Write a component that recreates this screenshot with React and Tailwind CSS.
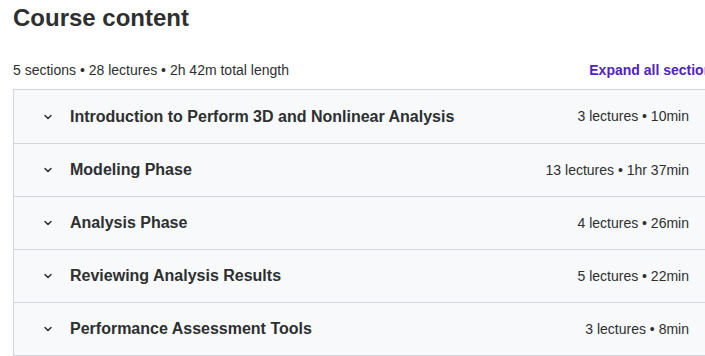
import React from 'react';

const sections = [
    { title: 'Introduction to Perform 3D and Nonlinear Analysis', meta: '3 lectures • 10min' },
    { title: 'Modeling Phase', meta: '13 lectures • 1hr 37min' },
    { title: 'Analysis Phase', meta: '4 lectures • 26min' },
    { title: 'Reviewing Analysis Results', meta: '5 lectures • 22min' },
    { title: 'Performance Assessment Tools', meta: '3 lectures • 8min' },
];

const Chevron = () => (
    <svg width="12" height="12" viewBox="0 0 24 24" fill="none" stroke="#2d2f31" strokeWidth="3" strokeLinecap="round" strokeLinejoin="round">
        <path d="M6 9l6 6 6-6" />
    </svg>
);

const App = () => {
    return (
        <div className="w-[705px] h-[356px] overflow-hidden bg-white text-[#2d2f31]" style={{ fontFamily: '"Liberation Sans", Arial, sans-serif' }}>
            <div className="w-[720px] shrink-0 pl-[13px] pt-[3px]">
                {/* Header */}
                <h2 className="text-[24px] leading-[30px] font-bold">Course content</h2>
                <div className="flex items-center justify-between mt-[27px] h-[20px]">
                    <span className="text-[14px] text-[#2d2f31]">5 sections • 28 lectures • 2h 42m total length</span>
                    <span className="text-[14px] font-bold text-[#5022c3] whitespace-nowrap">Expand all sections</span>
                </div>

                {/* Sections */}
                <div className="mt-[9px] border border-[#d1d7dc] bg-[#f7f9fa]">
                    {sections.map((s, i) => (
                        <div
                            key={s.title}
                            className={`flex items-center justify-between h-[53px] pl-[28px] pr-[30px] ${i > 0 ? 'border-t border-[#d1d7dc]' : ''}`}
                        >
                            <div className="flex items-center gap-[16px]">
                                <Chevron />
                                <span className="text-[16px] font-bold">{s.title}</span>
                            </div>
                            <span className="text-[14px] text-[#2d2f31]">{s.meta}</span>
                        </div>
                    ))}
                </div>
            </div>
        </div>
    );
};

export default App;
